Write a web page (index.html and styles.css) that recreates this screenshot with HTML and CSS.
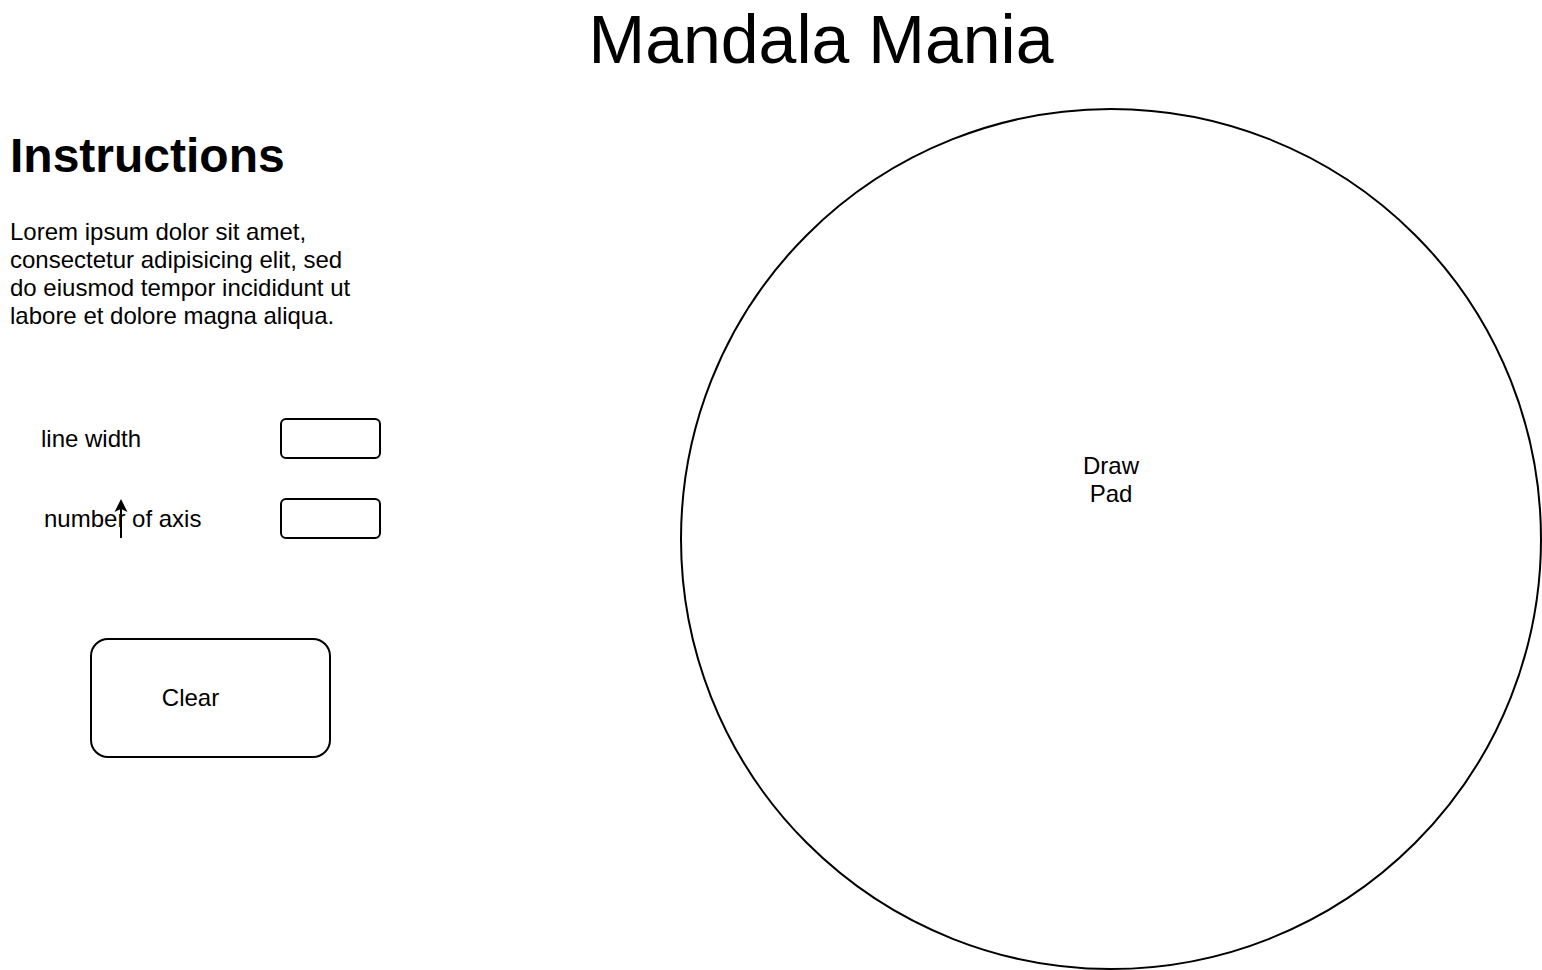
FILE: index.html
```html
<!DOCTYPE html>
<html lang="en">
<head>
	<meta charset="UTF-8">
	<title>Mandala Mania</title>
	<link rel="stylesheet" href="styles.css">
</head>
<body>
	<h1 class="title">Mandala Mania</h1>
	<div class="main">
		<div class="side">
			<h2 class="heading">Instructions</h2>
			<p class="intro">Lorem ipsum dolor sit amet, consectetur adipisicing elit, sed do eiusmod tempor incididunt ut labore et dolore magna aliqua.</p>

			<div class="row">
				<label class="label" for="lineWidth">line width</label>
				<input class="field" id="lineWidth" type="text">
			</div>
			<div class="row row-axis">
				<label class="label" for="axisCount">number of axis</label>
				<input class="field" id="axisCount" type="text">
				<svg class="arrow" width="16" height="40" viewBox="0 0 16 40">
					<line x1="8" y1="10" x2="8" y2="40" stroke="#000" stroke-width="2"/>
					<polygon points="8,1 14.5,14 8,11 1.5,14" fill="#000"/>
				</svg>
			</div>

			<button class="clear" id="clear">Clear</button>
		</div>

		<div class="pad" id="pad">
			<span class="pad-label">Draw<br>Pad</span>
		</div>
	</div>
</body>
</html>
```

FILE: styles.css
```css
* {
	margin: 0;
	padding: 0;
	box-sizing: border-box;
}
body {
	background: #fff;
	color: #000;
	font-family: "Liberation Sans", Arial, sans-serif;
	font-size: 24px;
	line-height: 28px;
}
.title {
	font-size: 68px;
	line-height: 78px;
	font-weight: 400;
	text-align: center;
	padding-left: 100px;
}
.main {
	display: flex;
}
.side {
	width: 680px;
	padding-left: 10px;
}
.heading {
	margin-top: 50px;
	font-size: 48px;
	line-height: 56px;
	font-weight: 700;
}
.intro {
	margin-top: 34px;
	max-width: 360px;
}
.row {
	position: relative;
	display: flex;
	align-items: center;
	margin-top: 88px;
}
.row-axis {
	margin-top: 39px;
}
.label {
	width: 270px;
	padding-left: 31px;
}
.row-axis .label {
	padding-left: 34px;
}
.field {
	width: 101px;
	height: 41px;
	border: 2px solid #000;
	border-radius: 6px;
	background: #fff;
	outline: 0;
}
.arrow {
	position: absolute;
	left: 103px;
	top: 0;
}
.clear {
	display: flex;
	align-items: center;
	justify-content: center;
	margin: 99px 0 0 80px;
	width: 241px;
	height: 120px;
	padding-right: 40px;
	border: 2px solid #000;
	border-radius: 18px;
	background: #fff;
	color: #000;
	font: inherit;
	cursor: pointer;
}
.pad {
	display: flex;
	align-items: center;
	justify-content: center;
	margin-top: 30px;
	width: 862px;
	height: 862px;
	padding-bottom: 118px;
	border: 2px solid #000;
	border-radius: 50%;
	text-align: center;
}
```
